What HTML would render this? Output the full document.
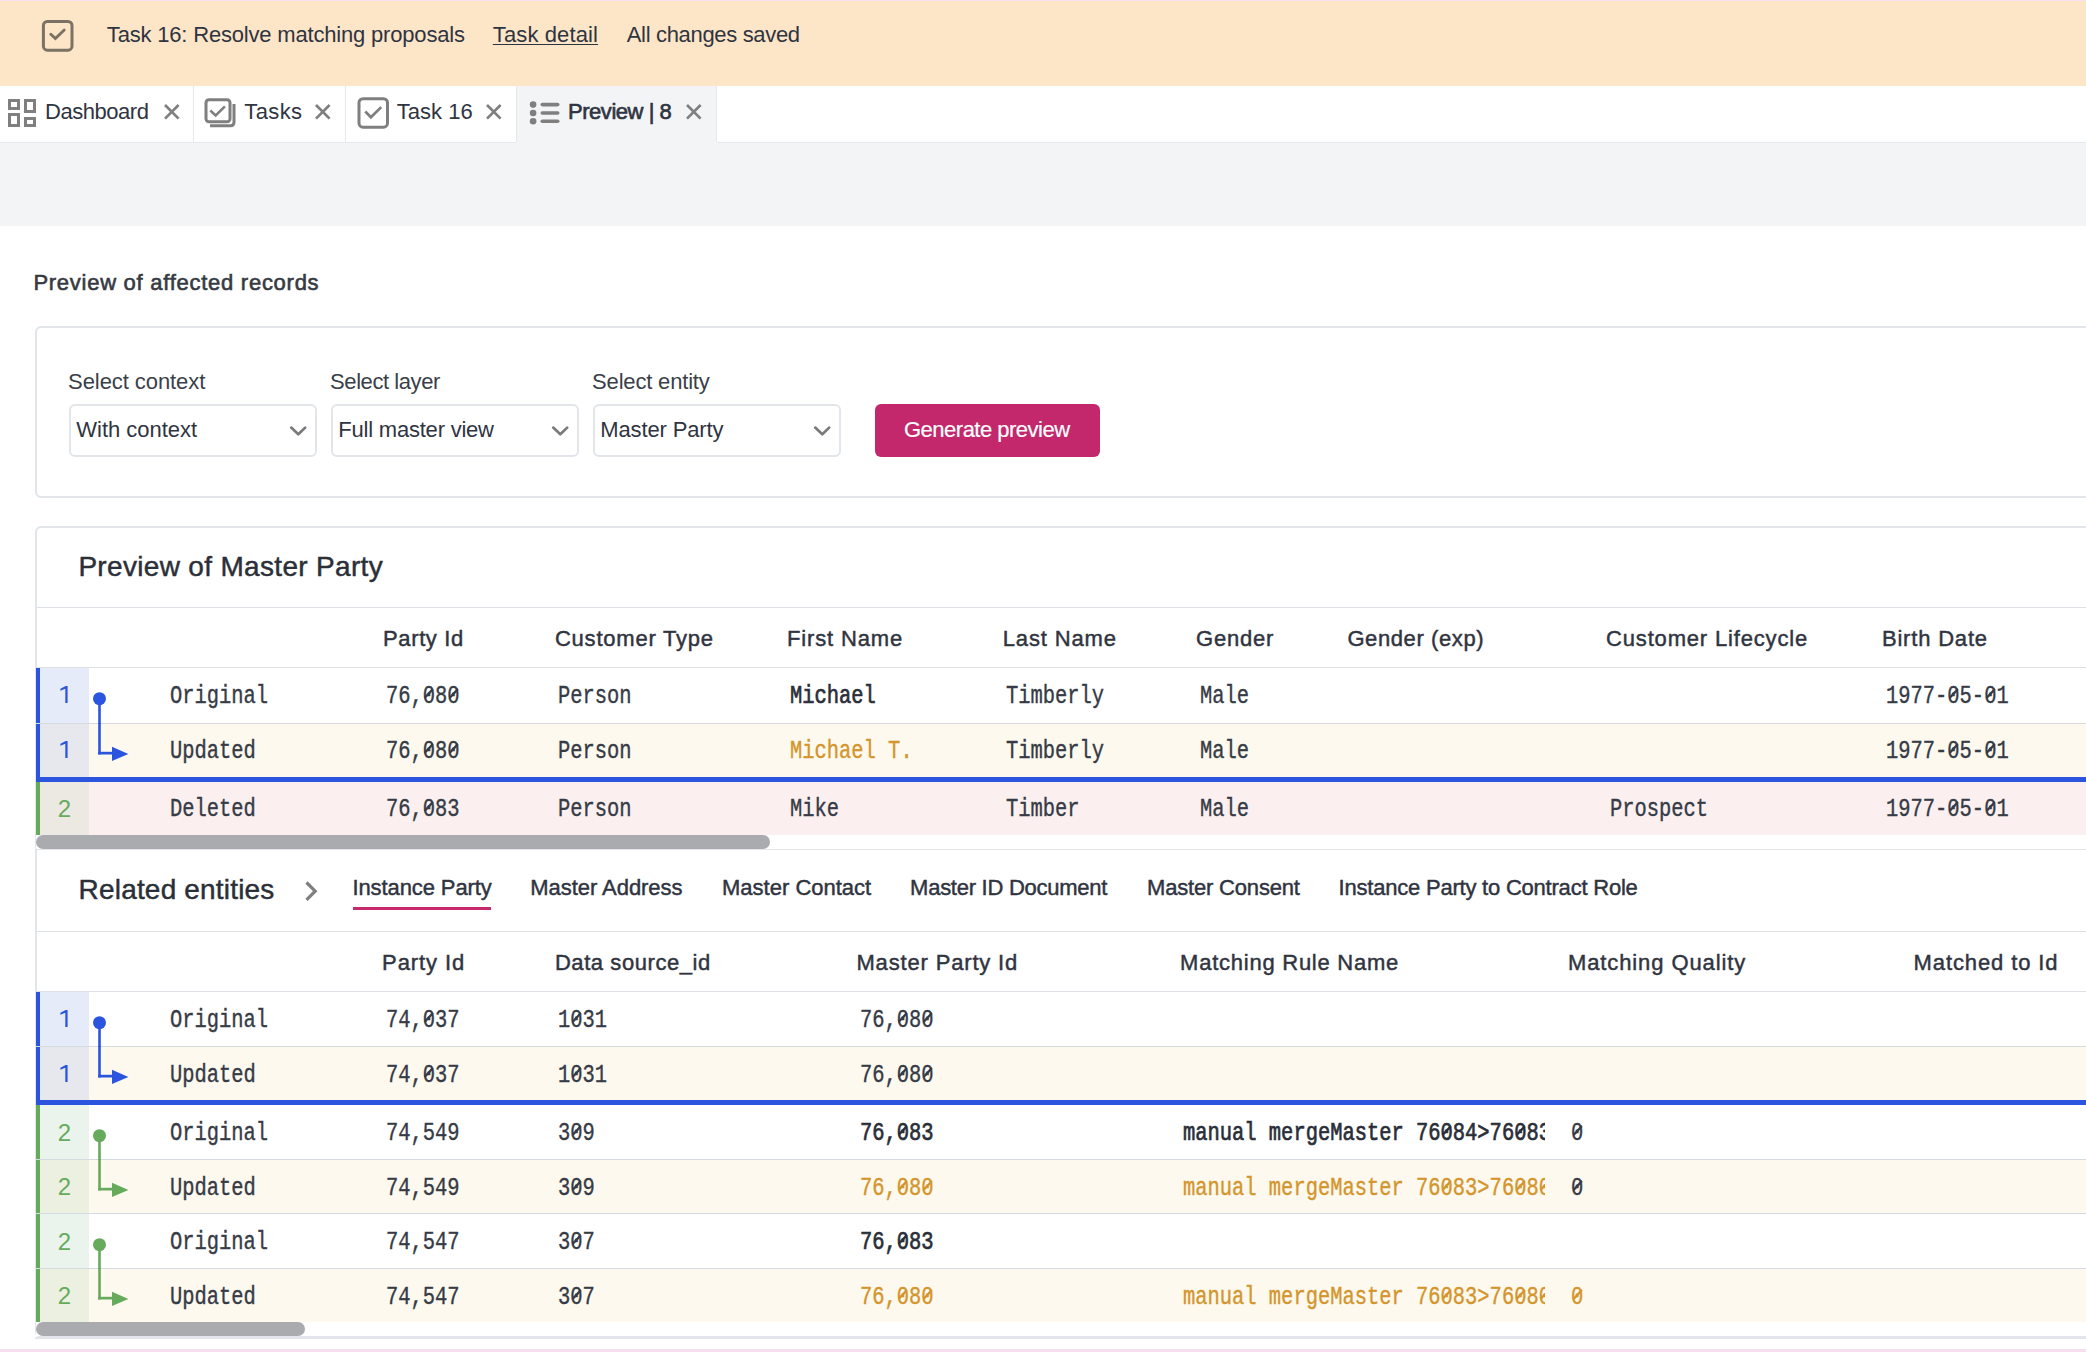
<!DOCTYPE html>
<html><head><meta charset="utf-8"><style>
html,body{margin:0;padding:0;width:2086px;height:1352px;overflow:hidden;background:#fff;position:relative}
.t{position:absolute;white-space:nowrap;line-height:1}
.z{position:relative}
.z::after{content:'';position:absolute;left:5.5px;top:3.6px;width:1.5px;height:10.6px;background:currentColor;transform:rotate(50deg)}
</style></head><body><div style="position:absolute;left:0px;top:0px;width:2086px;height:1px;background:#f6e0ef"></div><div style="position:absolute;left:0px;top:1px;width:2086px;height:85px;background:#fde6c8"></div><svg style="position:absolute;left:40px;top:18px" width="36" height="36" viewBox="0 0 36 36"><rect x="3.4" y="3.4" width="28.6" height="28.8" rx="4" fill="none" stroke="#7a7262" stroke-width="3"/><path d="M10.8 16.2 L15.4 20.6 L24.2 12" fill="none" stroke="#7a7262" stroke-width="2.9" stroke-linecap="round"/></svg><div style="position:absolute;left:0px;top:86px;width:2086px;height:56px;background:#ffffff"></div><div style="position:absolute;left:0px;top:142px;width:2086px;height:1px;background:#e4e7ec"></div><div style="position:absolute;left:192.5px;top:86px;width:1px;height:56px;background:#e6e9ef"></div><div style="position:absolute;left:345px;top:86px;width:1px;height:56px;background:#e6e9ef"></div><div style="position:absolute;left:516px;top:86px;width:200px;height:57px;background:#f3f4f6;border-left:1px solid #e4e7ec;border-right:1px solid #e4e7ec;box-sizing:border-box;width:201px"></div><svg style="position:absolute;left:6px;top:97px" width="32" height="32" viewBox="0 0 32 32" fill="none" stroke="#7f7f7f" stroke-width="3"><rect x="3.5" y="3.5" width="9" height="8"/><rect x="19.5" y="3.5" width="9" height="11"/><rect x="3.5" y="17.5" width="9" height="11"/><rect x="19.5" y="21.5" width="9" height="7"/></svg><svg style="position:absolute;left:162.1px;top:102.10000000000001px" width="19.6" height="19.6" viewBox="0 0 19.6 19.6"><path d="M3 3 L16.6 16.6 M16.6 3 L3 16.6" stroke="#7f7f7f" stroke-width="2.7" fill="none"/></svg><svg style="position:absolute;left:202px;top:96px" width="36" height="34" viewBox="0 0 36 34" fill="none" stroke="#7f7f7f" stroke-width="3"><rect x="4" y="3.8" width="24" height="22" rx="3"/><path d="M8 29.8 H28.5 Q32 29.8 32 26.3 V8" /><path d="M8.3 14.5 L13.7 19.5 L22.9 10.3" stroke-width="2.5"/></svg><svg style="position:absolute;left:313.3px;top:102.0px" width="19.6" height="19.6" viewBox="0 0 19.6 19.6"><path d="M3 3 L16.6 16.6 M16.6 3 L3 16.6" stroke="#7f7f7f" stroke-width="2.7" fill="none"/></svg><svg style="position:absolute;left:355px;top:95px" width="36" height="36" viewBox="0 0 36 36" fill="none" stroke="#7f7f7f" stroke-width="3"><rect x="4" y="3.7" width="28.5" height="28.5" rx="4"/><path d="M10.3 16.5 L15.9 22.3 L26.2 12.1" stroke-width="2.7"/></svg><svg style="position:absolute;left:484.4px;top:102.10000000000001px" width="19.6" height="19.6" viewBox="0 0 19.6 19.6"><path d="M3 3 L16.6 16.6 M16.6 3 L3 16.6" stroke="#7f7f7f" stroke-width="2.7" fill="none"/></svg><svg style="position:absolute;left:526px;top:98px" width="38" height="30" viewBox="0 0 38 30" fill="#7f7f7f"><circle cx="7.1" cy="6.6" r="3.3"/><circle cx="7.1" cy="15" r="3.3"/><circle cx="7.1" cy="23.2" r="3.3"/><rect x="14.5" y="4.8" width="19" height="3.6" rx="1.8"/><rect x="14.5" y="13.2" width="19" height="3.6" rx="1.8"/><rect x="14.5" y="21.4" width="19" height="3.6" rx="1.8"/></svg><svg style="position:absolute;left:683.6px;top:102.10000000000001px" width="19.6" height="19.6" viewBox="0 0 19.6 19.6"><path d="M3 3 L16.6 16.6 M16.6 3 L3 16.6" stroke="#7f7f7f" stroke-width="2.7" fill="none"/></svg><div style="position:absolute;left:0px;top:143px;width:2086px;height:83px;background:#f3f4f6"></div><div style="position:absolute;left:516px;top:142px;width:201px;height:2px;background:#f3f4f6"></div><div style="position:absolute;left:35px;top:326px;width:2100px;height:172px;border:2px solid #e2e5ea;border-radius:6px;box-sizing:border-box;background:#fff"></div><div style="position:absolute;left:69px;top:404px;width:248px;height:53px;border:2px solid #e2e6eb;border-radius:6px;box-sizing:border-box;background:#fff"></div><svg style="position:absolute;left:288.3px;top:420px" width="20" height="20" viewBox="0 0 20 20"><path d="M3.2 7.6 L10.3 14.3 L17.2 7.6" fill="none" stroke="#7a7a7a" stroke-width="2.7" stroke-linecap="round" stroke-linejoin="round"/></svg><div style="position:absolute;left:331px;top:404px;width:248px;height:53px;border:2px solid #e2e6eb;border-radius:6px;box-sizing:border-box;background:#fff"></div><svg style="position:absolute;left:550.3px;top:420px" width="20" height="20" viewBox="0 0 20 20"><path d="M3.2 7.6 L10.3 14.3 L17.2 7.6" fill="none" stroke="#7a7a7a" stroke-width="2.7" stroke-linecap="round" stroke-linejoin="round"/></svg><div style="position:absolute;left:593px;top:404px;width:248px;height:53px;border:2px solid #e2e6eb;border-radius:6px;box-sizing:border-box;background:#fff"></div><svg style="position:absolute;left:812.3px;top:420px" width="20" height="20" viewBox="0 0 20 20"><path d="M3.2 7.6 L10.3 14.3 L17.2 7.6" fill="none" stroke="#7a7a7a" stroke-width="2.7" stroke-linecap="round" stroke-linejoin="round"/></svg><div style="position:absolute;left:875px;top:404px;width:225px;height:53px;background:#c2286b;border-radius:6px"></div><div style="position:absolute;left:35px;top:526px;width:2100px;height:812px;border:2px solid #e2e5ea;border-radius:6px;box-sizing:border-box;background:#fff"></div><div style="position:absolute;left:37px;top:606.5px;width:2060px;height:1px;background:#dde1e6"></div><div style="position:absolute;left:36px;top:666.5px;width:2060px;height:1px;background:#dde1e6"></div><div style="position:absolute;left:36px;top:667.5px;width:2060px;height:55px;background:#ffffff"></div><div style="position:absolute;left:40px;top:667.5px;width:49px;height:55px;background:#e6ebfa"></div><div style="position:absolute;left:36px;top:667.5px;width:4px;height:55px;background:#2c55df"></div><div style="position:absolute;left:36px;top:722.5px;width:2060px;height:1px;background:#d6dbe1"></div><svg style="position:absolute;left:55px;top:683.0px" width="20" height="24" viewBox="0 0 20 24"><path d="M5.4 2.9 L10.7 0.3 L12.6 0.3 L12.6 17.3 L10.3 17.3 L10.3 3.0 L5.4 4.9 Z" fill="#2c55df" transform="translate(0 2.8)"/></svg><svg style="position:absolute;left:90px;top:690.0px" width="20" height="63" viewBox="0 0 20 63"><circle cx="9.5" cy="8.7" r="6.5" fill="#2c55df"/><rect x="8.2" y="8.7" width="2.6" height="55" fill="#2c55df"/></svg><div style="position:absolute;left:36px;top:723.5px;width:2060px;height:53px;background:#fdf9ee"></div><div style="position:absolute;left:40px;top:723.5px;width:49px;height:53px;background:#e7e8ee"></div><div style="position:absolute;left:36px;top:723.5px;width:4px;height:53px;background:#2c55df"></div><div style="position:absolute;left:36px;top:776.5px;width:2060px;height:5px;background:#2c55df"></div><svg style="position:absolute;left:55px;top:738.0px" width="20" height="24" viewBox="0 0 20 24"><path d="M5.4 2.9 L10.7 0.3 L12.6 0.3 L12.6 17.3 L10.3 17.3 L10.3 3.0 L5.4 4.9 Z" fill="#2c55df" transform="translate(0 2.8)"/></svg><svg style="position:absolute;left:90px;top:722.5px" width="42" height="53" viewBox="0 0 42 53"><rect x="8.2" y="0" width="2.6" height="31.5" fill="#2c55df"/><rect x="8.2" y="28.8" width="16" height="2.7" fill="#2c55df"/><path d="M22 23.7 L38.4 30.9 L22 38.1 Z" fill="#2c55df"/></svg><div style="position:absolute;left:36px;top:781.5px;width:2060px;height:53px;background:#fbf0ef"></div><div style="position:absolute;left:40px;top:781.5px;width:49px;height:53px;background:#ebe9e2"></div><div style="position:absolute;left:36px;top:781.5px;width:4px;height:53px;background:#66ab5c"></div><div style="position:absolute;left:36px;top:835px;width:2060px;height:14px;background:#ffffff"></div><div style="position:absolute;left:36px;top:835.3px;width:734px;height:13.7px;background:#aaabaf;border-radius:7px"></div><div style="position:absolute;left:36px;top:849px;width:2060px;height:1px;background:#e3e5e8"></div><svg style="position:absolute;left:300px;top:877px" width="22" height="28" viewBox="0 0 22 28"><path d="M6.5 5.5 L15.2 14.2 L6.5 22.9" fill="none" stroke="#7f7f7f" stroke-width="3.2"/></svg><div style="position:absolute;left:353px;top:907px;width:138px;height:3px;background:#c62a6c"></div><div style="position:absolute;left:37px;top:930.6px;width:2060px;height:1px;background:#dde1e6"></div><div style="position:absolute;left:36px;top:991.1px;width:2060px;height:1px;background:#dde1e6"></div><div style="position:absolute;left:36px;top:992.1px;width:2060px;height:54px;background:#ffffff"></div><div style="position:absolute;left:40px;top:992.1px;width:49px;height:54px;background:#e6ebfa"></div><div style="position:absolute;left:36px;top:992.1px;width:4px;height:54px;background:#2c55df"></div><div style="position:absolute;left:36px;top:1046.1px;width:2060px;height:1px;background:#d6dbe1"></div><svg style="position:absolute;left:55px;top:1007.1px" width="20" height="24" viewBox="0 0 20 24"><path d="M5.4 2.9 L10.7 0.3 L12.6 0.3 L12.6 17.3 L10.3 17.3 L10.3 3.0 L5.4 4.9 Z" fill="#2c55df" transform="translate(0 2.8)"/></svg><svg style="position:absolute;left:90px;top:1014.1px" width="20" height="62" viewBox="0 0 20 62"><circle cx="9.5" cy="8.7" r="6.5" fill="#2c55df"/><rect x="8.2" y="8.7" width="2.6" height="54" fill="#2c55df"/></svg><div style="position:absolute;left:36px;top:1047.1px;width:2060px;height:53px;background:#fdf9ee"></div><div style="position:absolute;left:40px;top:1047.1px;width:49px;height:53px;background:#e7e8ee"></div><div style="position:absolute;left:36px;top:1047.1px;width:4px;height:53px;background:#2c55df"></div><div style="position:absolute;left:36px;top:1100.1px;width:2060px;height:5px;background:#2c55df"></div><svg style="position:absolute;left:55px;top:1061.6px" width="20" height="24" viewBox="0 0 20 24"><path d="M5.4 2.9 L10.7 0.3 L12.6 0.3 L12.6 17.3 L10.3 17.3 L10.3 3.0 L5.4 4.9 Z" fill="#2c55df" transform="translate(0 2.8)"/></svg><svg style="position:absolute;left:90px;top:1046.1px" width="42" height="53" viewBox="0 0 42 53"><rect x="8.2" y="0" width="2.6" height="31.5" fill="#2c55df"/><rect x="8.2" y="28.8" width="16" height="2.7" fill="#2c55df"/><path d="M22 23.7 L38.4 30.9 L22 38.1 Z" fill="#2c55df"/></svg><div style="position:absolute;left:36px;top:1105.1px;width:2060px;height:54px;background:#ffffff"></div><div style="position:absolute;left:40px;top:1105.1px;width:49px;height:54px;background:#ebf4ec"></div><div style="position:absolute;left:36px;top:1105.1px;width:4px;height:54px;background:#66ab5c"></div><div style="position:absolute;left:36px;top:1159.1px;width:2060px;height:1px;background:#d6dbe1"></div><svg style="position:absolute;left:90px;top:1127.1px" width="20" height="62" viewBox="0 0 20 62"><circle cx="9.5" cy="8.7" r="6.5" fill="#66ab5c"/><rect x="8.2" y="8.7" width="2.6" height="54" fill="#66ab5c"/></svg><div style="position:absolute;left:36px;top:1160.1px;width:2060px;height:53px;background:#fdf9ee"></div><div style="position:absolute;left:40px;top:1160.1px;width:49px;height:53px;background:#ecf0e0"></div><div style="position:absolute;left:36px;top:1160.1px;width:4px;height:53px;background:#66ab5c"></div><div style="position:absolute;left:36px;top:1213.1px;width:2060px;height:1px;background:#d6dbe1"></div><svg style="position:absolute;left:90px;top:1159.1px" width="42" height="53" viewBox="0 0 42 53"><rect x="8.2" y="0" width="2.6" height="31.5" fill="#66ab5c"/><rect x="8.2" y="28.8" width="16" height="2.7" fill="#66ab5c"/><path d="M22 23.7 L38.4 30.9 L22 38.1 Z" fill="#66ab5c"/></svg><div style="position:absolute;left:36px;top:1214.1px;width:2060px;height:54px;background:#ffffff"></div><div style="position:absolute;left:40px;top:1214.1px;width:49px;height:54px;background:#ebf4ec"></div><div style="position:absolute;left:36px;top:1214.1px;width:4px;height:54px;background:#66ab5c"></div><div style="position:absolute;left:36px;top:1268.1px;width:2060px;height:1px;background:#d6dbe1"></div><svg style="position:absolute;left:90px;top:1236.1px" width="20" height="62" viewBox="0 0 20 62"><circle cx="9.5" cy="8.7" r="6.5" fill="#66ab5c"/><rect x="8.2" y="8.7" width="2.6" height="54" fill="#66ab5c"/></svg><div style="position:absolute;left:36px;top:1269.1px;width:2060px;height:53px;background:#fdf9ee"></div><div style="position:absolute;left:40px;top:1269.1px;width:49px;height:53px;background:#ecf0e0"></div><div style="position:absolute;left:36px;top:1269.1px;width:4px;height:53px;background:#66ab5c"></div><svg style="position:absolute;left:90px;top:1268.1px" width="42" height="53" viewBox="0 0 42 53"><rect x="8.2" y="0" width="2.6" height="31.5" fill="#66ab5c"/><rect x="8.2" y="28.8" width="16" height="2.7" fill="#66ab5c"/><path d="M22 23.7 L38.4 30.9 L22 38.1 Z" fill="#66ab5c"/></svg><div style="position:absolute;left:36px;top:1322.3px;width:2060px;height:14px;background:#ffffff"></div><div style="position:absolute;left:36px;top:1322.3px;width:268.5px;height:13.5px;background:#aaabaf;border-radius:7px"></div><div style="position:absolute;left:35px;top:1336.5px;width:2100px;height:2px;background:#e2e5ea"></div><div style="position:absolute;left:0px;top:1349px;width:2086px;height:3px;background:#f6e0ef"></div><div class="t" style="left:106.82px;top:23.68px;font-family:'Liberation Sans', sans-serif;font-size:22px;font-weight:400;color:#2f3441;letter-spacing:-0.183px;">Task 16: Resolve matching proposals</div><div class="t" style="left:492.82px;top:23.68px;font-family:'Liberation Sans', sans-serif;font-size:22px;font-weight:400;color:#2f3441;letter-spacing:0.115px;text-decoration:underline;text-underline-offset:1.5px;text-decoration-thickness:1.2px;">Task detail</div><div class="t" style="left:626.72px;top:23.68px;font-family:'Liberation Sans', sans-serif;font-size:22px;font-weight:400;color:#2f3441;letter-spacing:-0.323px;">All changes saved</div><div class="t" style="left:45.12px;top:101.38px;font-family:'Liberation Sans', sans-serif;font-size:22px;font-weight:400;color:#2f3441;letter-spacing:-0.480px;">Dashboard</div><div class="t" style="left:244.32px;top:101.38px;font-family:'Liberation Sans', sans-serif;font-size:22px;font-weight:400;color:#2f3441;letter-spacing:0.388px;">Tasks</div><div class="t" style="left:396.72px;top:101.38px;font-family:'Liberation Sans', sans-serif;font-size:22px;font-weight:400;color:#2f3441;letter-spacing:0.029px;">Task 16</div><div class="t" style="left:568.02px;top:101.18px;font-family:'Liberation Sans', sans-serif;font-size:22px;font-weight:400;color:#2f3441;letter-spacing:-0.462px;-webkit-text-stroke:0.65px currentColor;">Preview | 8</div><div class="t" style="left:33.42px;top:271.88px;font-family:'Liberation Sans', sans-serif;font-size:22px;font-weight:400;color:#363a42;letter-spacing:0.732px;-webkit-text-stroke:0.6px currentColor;">Preview of affected records</div><div class="t" style="left:68.12px;top:371.08px;font-family:'Liberation Sans', sans-serif;font-size:22px;font-weight:400;color:#3a3f4a;letter-spacing:-0.076px;">Select context</div><div class="t" style="left:76.32px;top:418.68px;font-family:'Liberation Sans', sans-serif;font-size:22px;font-weight:400;color:#2f3441;letter-spacing:-0.022px;">With context</div><div class="t" style="left:330.12px;top:371.08px;font-family:'Liberation Sans', sans-serif;font-size:22px;font-weight:400;color:#3a3f4a;letter-spacing:-0.432px;">Select layer</div><div class="t" style="left:338.32px;top:418.68px;font-family:'Liberation Sans', sans-serif;font-size:22px;font-weight:400;color:#2f3441;letter-spacing:-0.215px;">Full master view</div><div class="t" style="left:592.12px;top:371.08px;font-family:'Liberation Sans', sans-serif;font-size:22px;font-weight:400;color:#3a3f4a;letter-spacing:-0.179px;">Select entity</div><div class="t" style="left:600.32px;top:418.68px;font-family:'Liberation Sans', sans-serif;font-size:22px;font-weight:400;color:#2f3441;letter-spacing:-0.137px;">Master Party</div><div class="t" style="left:904.02px;top:418.78px;font-family:'Liberation Sans', sans-serif;font-size:22px;font-weight:400;color:#ffffff;letter-spacing:-0.504px;-webkit-text-stroke:0.2px #fff;">Generate preview</div><div class="t" style="left:78.38px;top:553.10px;font-family:'Liberation Sans', sans-serif;font-size:28px;font-weight:400;color:#2b2f38;letter-spacing:0.323px;-webkit-text-stroke:0.45px currentColor;">Preview of Master Party</div><div class="t" style="left:383.02px;top:627.68px;font-family:'Liberation Sans', sans-serif;font-size:22px;font-weight:400;color:#30343f;letter-spacing:0.627px;-webkit-text-stroke:0.45px currentColor;">Party Id</div><div class="t" style="left:554.92px;top:627.68px;font-family:'Liberation Sans', sans-serif;font-size:22px;font-weight:400;color:#30343f;letter-spacing:0.785px;-webkit-text-stroke:0.45px currentColor;">Customer Type</div><div class="t" style="left:787.02px;top:627.68px;font-family:'Liberation Sans', sans-serif;font-size:22px;font-weight:400;color:#30343f;letter-spacing:0.849px;-webkit-text-stroke:0.45px currentColor;">First Name</div><div class="t" style="left:1002.72px;top:627.68px;font-family:'Liberation Sans', sans-serif;font-size:22px;font-weight:400;color:#30343f;letter-spacing:0.851px;-webkit-text-stroke:0.45px currentColor;">Last Name</div><div class="t" style="left:1196.02px;top:627.68px;font-family:'Liberation Sans', sans-serif;font-size:22px;font-weight:400;color:#30343f;letter-spacing:0.762px;-webkit-text-stroke:0.45px currentColor;">Gender</div><div class="t" style="left:1347.42px;top:627.68px;font-family:'Liberation Sans', sans-serif;font-size:22px;font-weight:400;color:#30343f;letter-spacing:0.598px;-webkit-text-stroke:0.45px currentColor;">Gender (exp)</div><div class="t" style="left:1606.02px;top:627.68px;font-family:'Liberation Sans', sans-serif;font-size:22px;font-weight:400;color:#30343f;letter-spacing:0.831px;-webkit-text-stroke:0.45px currentColor;">Customer Lifecycle</div><div class="t" style="left:1881.92px;top:627.68px;font-family:'Liberation Sans', sans-serif;font-size:22px;font-weight:400;color:#30343f;letter-spacing:0.819px;-webkit-text-stroke:0.45px currentColor;">Birth Date</div><div class="t" style="left:170.00px;top:688.33px;font-family:'Liberation Mono', monospace;font-size:20.45px;font-weight:400;color:#363b46;transform:scaleY(1.27);transform-origin:0 76.6%;-webkit-text-stroke:0.3px currentColor;">Original</div><div class="t" style="left:386.00px;top:688.33px;font-family:'Liberation Mono', monospace;font-size:20.45px;font-weight:400;color:#363b46;transform:scaleY(1.27);transform-origin:0 76.6%;-webkit-text-stroke:0.3px currentColor;">76,<span class="z">0</span>8<span class="z">0</span></div><div class="t" style="left:558.00px;top:688.33px;font-family:'Liberation Mono', monospace;font-size:20.45px;font-weight:400;color:#363b46;transform:scaleY(1.27);transform-origin:0 76.6%;-webkit-text-stroke:0.3px currentColor;">Person</div><div class="t" style="left:790.00px;top:688.33px;font-family:'Liberation Mono', monospace;font-size:20.45px;font-weight:400;color:#2a2e38;transform:scaleY(1.27);transform-origin:0 76.6%;-webkit-text-stroke:0.55px currentColor;">Michael</div><div class="t" style="left:1006.00px;top:688.33px;font-family:'Liberation Mono', monospace;font-size:20.45px;font-weight:400;color:#363b46;transform:scaleY(1.27);transform-origin:0 76.6%;-webkit-text-stroke:0.3px currentColor;">Timberly</div><div class="t" style="left:1200.00px;top:688.33px;font-family:'Liberation Mono', monospace;font-size:20.45px;font-weight:400;color:#363b46;transform:scaleY(1.27);transform-origin:0 76.6%;-webkit-text-stroke:0.3px currentColor;">Male</div><div class="t" style="left:1886.00px;top:688.33px;font-family:'Liberation Mono', monospace;font-size:20.45px;font-weight:400;color:#363b46;transform:scaleY(1.27);transform-origin:0 76.6%;-webkit-text-stroke:0.3px currentColor;">1977-<span class="z">0</span>5-<span class="z">0</span>1</div><div class="t" style="left:170.00px;top:743.33px;font-family:'Liberation Mono', monospace;font-size:20.45px;font-weight:400;color:#363b46;transform:scaleY(1.27);transform-origin:0 76.6%;-webkit-text-stroke:0.3px currentColor;">Updated</div><div class="t" style="left:386.00px;top:743.33px;font-family:'Liberation Mono', monospace;font-size:20.45px;font-weight:400;color:#363b46;transform:scaleY(1.27);transform-origin:0 76.6%;-webkit-text-stroke:0.3px currentColor;">76,<span class="z">0</span>8<span class="z">0</span></div><div class="t" style="left:558.00px;top:743.33px;font-family:'Liberation Mono', monospace;font-size:20.45px;font-weight:400;color:#363b46;transform:scaleY(1.27);transform-origin:0 76.6%;-webkit-text-stroke:0.3px currentColor;">Person</div><div class="t" style="left:790.00px;top:743.33px;font-family:'Liberation Mono', monospace;font-size:20.45px;font-weight:400;color:#d4952c;transform:scaleY(1.27);transform-origin:0 76.6%;-webkit-text-stroke:0.3px currentColor;">Michael T.</div><div class="t" style="left:1006.00px;top:743.33px;font-family:'Liberation Mono', monospace;font-size:20.45px;font-weight:400;color:#363b46;transform:scaleY(1.27);transform-origin:0 76.6%;-webkit-text-stroke:0.3px currentColor;">Timberly</div><div class="t" style="left:1200.00px;top:743.33px;font-family:'Liberation Mono', monospace;font-size:20.45px;font-weight:400;color:#363b46;transform:scaleY(1.27);transform-origin:0 76.6%;-webkit-text-stroke:0.3px currentColor;">Male</div><div class="t" style="left:1886.00px;top:743.33px;font-family:'Liberation Mono', monospace;font-size:20.45px;font-weight:400;color:#363b46;transform:scaleY(1.27);transform-origin:0 76.6%;-webkit-text-stroke:0.3px currentColor;">1977-<span class="z">0</span>5-<span class="z">0</span>1</div><div class="t" style="left:57.84px;top:796.68px;font-family:'Liberation Sans', sans-serif;font-size:24px;font-weight:400;color:#66ab5c;">2</div><div class="t" style="left:170.00px;top:801.33px;font-family:'Liberation Mono', monospace;font-size:20.45px;font-weight:400;color:#363b46;transform:scaleY(1.27);transform-origin:0 76.6%;-webkit-text-stroke:0.3px currentColor;">Deleted</div><div class="t" style="left:386.00px;top:801.33px;font-family:'Liberation Mono', monospace;font-size:20.45px;font-weight:400;color:#363b46;transform:scaleY(1.27);transform-origin:0 76.6%;-webkit-text-stroke:0.3px currentColor;">76,<span class="z">0</span>83</div><div class="t" style="left:558.00px;top:801.33px;font-family:'Liberation Mono', monospace;font-size:20.45px;font-weight:400;color:#363b46;transform:scaleY(1.27);transform-origin:0 76.6%;-webkit-text-stroke:0.3px currentColor;">Person</div><div class="t" style="left:790.00px;top:801.33px;font-family:'Liberation Mono', monospace;font-size:20.45px;font-weight:400;color:#363b46;transform:scaleY(1.27);transform-origin:0 76.6%;-webkit-text-stroke:0.3px currentColor;">Mike</div><div class="t" style="left:1006.00px;top:801.33px;font-family:'Liberation Mono', monospace;font-size:20.45px;font-weight:400;color:#363b46;transform:scaleY(1.27);transform-origin:0 76.6%;-webkit-text-stroke:0.3px currentColor;">Timber</div><div class="t" style="left:1200.00px;top:801.33px;font-family:'Liberation Mono', monospace;font-size:20.45px;font-weight:400;color:#363b46;transform:scaleY(1.27);transform-origin:0 76.6%;-webkit-text-stroke:0.3px currentColor;">Male</div><div class="t" style="left:1610.00px;top:801.33px;font-family:'Liberation Mono', monospace;font-size:20.45px;font-weight:400;color:#363b46;transform:scaleY(1.27);transform-origin:0 76.6%;-webkit-text-stroke:0.3px currentColor;">Prospect</div><div class="t" style="left:1886.00px;top:801.33px;font-family:'Liberation Mono', monospace;font-size:20.45px;font-weight:400;color:#363b46;transform:scaleY(1.27);transform-origin:0 76.6%;-webkit-text-stroke:0.3px currentColor;">1977-<span class="z">0</span>5-<span class="z">0</span>1</div><div class="t" style="left:78.58px;top:875.50px;font-family:'Liberation Sans', sans-serif;font-size:28px;font-weight:400;color:#2b2f38;letter-spacing:0.186px;-webkit-text-stroke:0.45px currentColor;">Related entities</div><div class="t" style="left:352.42px;top:876.78px;font-family:'Liberation Sans', sans-serif;font-size:22px;font-weight:400;color:#30343f;letter-spacing:-0.095px;-webkit-text-stroke:0.45px currentColor;">Instance Party</div><div class="t" style="left:530.32px;top:876.78px;font-family:'Liberation Sans', sans-serif;font-size:22px;font-weight:400;color:#30343f;letter-spacing:-0.050px;-webkit-text-stroke:0.45px currentColor;">Master Address</div><div class="t" style="left:722.02px;top:876.78px;font-family:'Liberation Sans', sans-serif;font-size:22px;font-weight:400;color:#30343f;letter-spacing:0.002px;-webkit-text-stroke:0.45px currentColor;">Master Contact</div><div class="t" style="left:910.12px;top:876.78px;font-family:'Liberation Sans', sans-serif;font-size:22px;font-weight:400;color:#30343f;letter-spacing:-0.267px;-webkit-text-stroke:0.45px currentColor;">Master ID Document</div><div class="t" style="left:1147.12px;top:876.78px;font-family:'Liberation Sans', sans-serif;font-size:22px;font-weight:400;color:#30343f;letter-spacing:-0.192px;-webkit-text-stroke:0.45px currentColor;">Master Consent</div><div class="t" style="left:1338.62px;top:876.78px;font-family:'Liberation Sans', sans-serif;font-size:22px;font-weight:400;color:#30343f;letter-spacing:-0.217px;-webkit-text-stroke:0.45px currentColor;">Instance Party to Contract Role</div><div class="t" style="left:382.12px;top:951.53px;font-family:'Liberation Sans', sans-serif;font-size:22px;font-weight:400;color:#30343f;letter-spacing:0.898px;-webkit-text-stroke:0.45px currentColor;">Party Id</div><div class="t" style="left:554.92px;top:951.53px;font-family:'Liberation Sans', sans-serif;font-size:22px;font-weight:400;color:#30343f;letter-spacing:0.570px;-webkit-text-stroke:0.45px currentColor;">Data source_id</div><div class="t" style="left:856.42px;top:951.53px;font-family:'Liberation Sans', sans-serif;font-size:22px;font-weight:400;color:#30343f;letter-spacing:0.839px;-webkit-text-stroke:0.45px currentColor;">Master Party Id</div><div class="t" style="left:1180.12px;top:951.53px;font-family:'Liberation Sans', sans-serif;font-size:22px;font-weight:400;color:#30343f;letter-spacing:0.751px;-webkit-text-stroke:0.45px currentColor;">Matching Rule Name</div><div class="t" style="left:1567.92px;top:951.53px;font-family:'Liberation Sans', sans-serif;font-size:22px;font-weight:400;color:#30343f;letter-spacing:0.903px;-webkit-text-stroke:0.45px currentColor;">Matching Quality</div><div class="t" style="left:1913.52px;top:951.53px;font-family:'Liberation Sans', sans-serif;font-size:22px;font-weight:400;color:#30343f;letter-spacing:0.899px;-webkit-text-stroke:0.45px currentColor;">Matched to Id</div><div class="t" style="left:170.00px;top:1012.43px;font-family:'Liberation Mono', monospace;font-size:20.45px;font-weight:400;color:#363b46;transform:scaleY(1.27);transform-origin:0 76.6%;-webkit-text-stroke:0.3px currentColor;">Original</div><div class="t" style="left:386.00px;top:1012.43px;font-family:'Liberation Mono', monospace;font-size:20.45px;font-weight:400;color:#363b46;transform:scaleY(1.27);transform-origin:0 76.6%;-webkit-text-stroke:0.3px currentColor;">74,<span class="z">0</span>37</div><div class="t" style="left:558.00px;top:1012.43px;font-family:'Liberation Mono', monospace;font-size:20.45px;font-weight:400;color:#363b46;transform:scaleY(1.27);transform-origin:0 76.6%;-webkit-text-stroke:0.3px currentColor;">1<span class="z">0</span>31</div><div class="t" style="left:860.00px;top:1012.43px;font-family:'Liberation Mono', monospace;font-size:20.45px;font-weight:400;color:#363b46;transform:scaleY(1.27);transform-origin:0 76.6%;-webkit-text-stroke:0.3px currentColor;">76,<span class="z">0</span>8<span class="z">0</span></div><div class="t" style="left:170.00px;top:1066.93px;font-family:'Liberation Mono', monospace;font-size:20.45px;font-weight:400;color:#363b46;transform:scaleY(1.27);transform-origin:0 76.6%;-webkit-text-stroke:0.3px currentColor;">Updated</div><div class="t" style="left:386.00px;top:1066.93px;font-family:'Liberation Mono', monospace;font-size:20.45px;font-weight:400;color:#363b46;transform:scaleY(1.27);transform-origin:0 76.6%;-webkit-text-stroke:0.3px currentColor;">74,<span class="z">0</span>37</div><div class="t" style="left:558.00px;top:1066.93px;font-family:'Liberation Mono', monospace;font-size:20.45px;font-weight:400;color:#363b46;transform:scaleY(1.27);transform-origin:0 76.6%;-webkit-text-stroke:0.3px currentColor;">1<span class="z">0</span>31</div><div class="t" style="left:860.00px;top:1066.93px;font-family:'Liberation Mono', monospace;font-size:20.45px;font-weight:400;color:#363b46;transform:scaleY(1.27);transform-origin:0 76.6%;-webkit-text-stroke:0.3px currentColor;">76,<span class="z">0</span>8<span class="z">0</span></div><div class="t" style="left:57.84px;top:1120.78px;font-family:'Liberation Sans', sans-serif;font-size:24px;font-weight:400;color:#66ab5c;">2</div><div class="t" style="left:170.00px;top:1125.43px;font-family:'Liberation Mono', monospace;font-size:20.45px;font-weight:400;color:#363b46;transform:scaleY(1.27);transform-origin:0 76.6%;-webkit-text-stroke:0.3px currentColor;">Original</div><div class="t" style="left:386.00px;top:1125.43px;font-family:'Liberation Mono', monospace;font-size:20.45px;font-weight:400;color:#363b46;transform:scaleY(1.27);transform-origin:0 76.6%;-webkit-text-stroke:0.3px currentColor;">74,549</div><div class="t" style="left:558.00px;top:1125.43px;font-family:'Liberation Mono', monospace;font-size:20.45px;font-weight:400;color:#363b46;transform:scaleY(1.27);transform-origin:0 76.6%;-webkit-text-stroke:0.3px currentColor;">3<span class="z">0</span>9</div><div class="t" style="left:860.00px;top:1125.43px;font-family:'Liberation Mono', monospace;font-size:20.45px;font-weight:400;color:#2a2e38;transform:scaleY(1.27);transform-origin:0 76.6%;-webkit-text-stroke:0.55px currentColor;">76,<span class="z">0</span>83</div><div style="position:absolute;left:1183px;top:1111.1px;width:362px;height:45px;overflow:hidden"><div style="position:absolute;left:-1183px;top:-1111.1px;width:2086px;height:1352px"><div class="t" style="left:1183.00px;top:1125.43px;font-family:'Liberation Mono', monospace;font-size:20.45px;font-weight:400;color:#2a2e38;transform:scaleY(1.27);transform-origin:0 76.6%;-webkit-text-stroke:0.55px currentColor;">manual mergeMaster 76<span class="z">0</span>84&gt;76<span class="z">0</span>83</div></div></div><div class="t" style="left:1571.00px;top:1125.43px;font-family:'Liberation Mono', monospace;font-size:20.45px;font-weight:400;color:#363b46;transform:scaleY(1.27);transform-origin:0 76.6%;-webkit-text-stroke:0.3px currentColor;"><span class="z">0</span></div><div class="t" style="left:57.84px;top:1175.28px;font-family:'Liberation Sans', sans-serif;font-size:24px;font-weight:400;color:#66ab5c;">2</div><div class="t" style="left:170.00px;top:1179.93px;font-family:'Liberation Mono', monospace;font-size:20.45px;font-weight:400;color:#363b46;transform:scaleY(1.27);transform-origin:0 76.6%;-webkit-text-stroke:0.3px currentColor;">Updated</div><div class="t" style="left:386.00px;top:1179.93px;font-family:'Liberation Mono', monospace;font-size:20.45px;font-weight:400;color:#363b46;transform:scaleY(1.27);transform-origin:0 76.6%;-webkit-text-stroke:0.3px currentColor;">74,549</div><div class="t" style="left:558.00px;top:1179.93px;font-family:'Liberation Mono', monospace;font-size:20.45px;font-weight:400;color:#363b46;transform:scaleY(1.27);transform-origin:0 76.6%;-webkit-text-stroke:0.3px currentColor;">3<span class="z">0</span>9</div><div class="t" style="left:860.00px;top:1179.93px;font-family:'Liberation Mono', monospace;font-size:20.45px;font-weight:400;color:#d4952c;transform:scaleY(1.27);transform-origin:0 76.6%;-webkit-text-stroke:0.3px currentColor;">76,<span class="z">0</span>8<span class="z">0</span></div><div style="position:absolute;left:1183px;top:1165.6px;width:362px;height:45px;overflow:hidden"><div style="position:absolute;left:-1183px;top:-1165.6px;width:2086px;height:1352px"><div class="t" style="left:1183.00px;top:1179.93px;font-family:'Liberation Mono', monospace;font-size:20.45px;font-weight:400;color:#d4952c;transform:scaleY(1.27);transform-origin:0 76.6%;-webkit-text-stroke:0.3px currentColor;">manual mergeMaster 76<span class="z">0</span>83&gt;76<span class="z">0</span>8<span class="z">0</span></div></div></div><div class="t" style="left:1571.00px;top:1179.93px;font-family:'Liberation Mono', monospace;font-size:20.45px;font-weight:400;color:#363b46;transform:scaleY(1.27);transform-origin:0 76.6%;-webkit-text-stroke:0.3px currentColor;"><span class="z">0</span></div><div class="t" style="left:57.84px;top:1229.78px;font-family:'Liberation Sans', sans-serif;font-size:24px;font-weight:400;color:#66ab5c;">2</div><div class="t" style="left:170.00px;top:1234.43px;font-family:'Liberation Mono', monospace;font-size:20.45px;font-weight:400;color:#363b46;transform:scaleY(1.27);transform-origin:0 76.6%;-webkit-text-stroke:0.3px currentColor;">Original</div><div class="t" style="left:386.00px;top:1234.43px;font-family:'Liberation Mono', monospace;font-size:20.45px;font-weight:400;color:#363b46;transform:scaleY(1.27);transform-origin:0 76.6%;-webkit-text-stroke:0.3px currentColor;">74,547</div><div class="t" style="left:558.00px;top:1234.43px;font-family:'Liberation Mono', monospace;font-size:20.45px;font-weight:400;color:#363b46;transform:scaleY(1.27);transform-origin:0 76.6%;-webkit-text-stroke:0.3px currentColor;">3<span class="z">0</span>7</div><div class="t" style="left:860.00px;top:1234.43px;font-family:'Liberation Mono', monospace;font-size:20.45px;font-weight:400;color:#2a2e38;transform:scaleY(1.27);transform-origin:0 76.6%;-webkit-text-stroke:0.55px currentColor;">76,<span class="z">0</span>83</div><div class="t" style="left:57.84px;top:1284.28px;font-family:'Liberation Sans', sans-serif;font-size:24px;font-weight:400;color:#66ab5c;">2</div><div class="t" style="left:170.00px;top:1288.93px;font-family:'Liberation Mono', monospace;font-size:20.45px;font-weight:400;color:#363b46;transform:scaleY(1.27);transform-origin:0 76.6%;-webkit-text-stroke:0.3px currentColor;">Updated</div><div class="t" style="left:386.00px;top:1288.93px;font-family:'Liberation Mono', monospace;font-size:20.45px;font-weight:400;color:#363b46;transform:scaleY(1.27);transform-origin:0 76.6%;-webkit-text-stroke:0.3px currentColor;">74,547</div><div class="t" style="left:558.00px;top:1288.93px;font-family:'Liberation Mono', monospace;font-size:20.45px;font-weight:400;color:#363b46;transform:scaleY(1.27);transform-origin:0 76.6%;-webkit-text-stroke:0.3px currentColor;">3<span class="z">0</span>7</div><div class="t" style="left:860.00px;top:1288.93px;font-family:'Liberation Mono', monospace;font-size:20.45px;font-weight:400;color:#d4952c;transform:scaleY(1.27);transform-origin:0 76.6%;-webkit-text-stroke:0.3px currentColor;">76,<span class="z">0</span>8<span class="z">0</span></div><div style="position:absolute;left:1183px;top:1274.6px;width:362px;height:45px;overflow:hidden"><div style="position:absolute;left:-1183px;top:-1274.6px;width:2086px;height:1352px"><div class="t" style="left:1183.00px;top:1288.93px;font-family:'Liberation Mono', monospace;font-size:20.45px;font-weight:400;color:#d4952c;transform:scaleY(1.27);transform-origin:0 76.6%;-webkit-text-stroke:0.3px currentColor;">manual mergeMaster 76<span class="z">0</span>83&gt;76<span class="z">0</span>8<span class="z">0</span></div></div></div><div class="t" style="left:1571.00px;top:1288.93px;font-family:'Liberation Mono', monospace;font-size:20.45px;font-weight:400;color:#d4952c;transform:scaleY(1.27);transform-origin:0 76.6%;-webkit-text-stroke:0.3px currentColor;"><span class="z">0</span></div></body></html>
